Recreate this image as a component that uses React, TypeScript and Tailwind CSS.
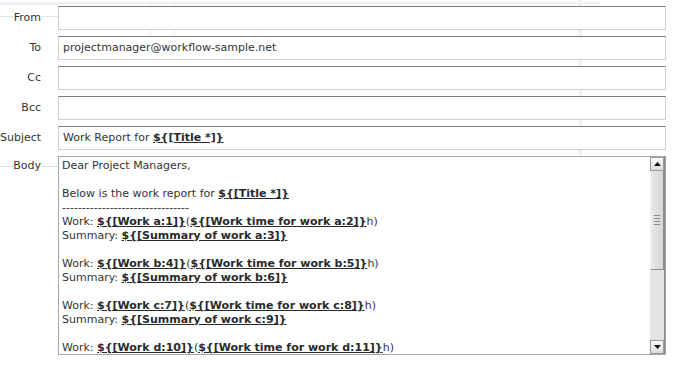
import React from "react";

/* Mail template form: header fields + body with fake classic scrollbar */

const font = "font-['DejaVu_Sans',sans-serif]";

function Ph({ children }: { children: React.ReactNode }) {
  return <span className="font-bold underline text-[#2a2a2a]">{children}</span>;
}

function Field({ label, value }: { label: string; value?: React.ReactNode }) {
  return (
    <div className="flex items-center h-6">
      <div className="w-[58px] shrink-0 pr-[17px] text-right">
        <span className="bg-white">{label}</span>
      </div>
      <div className="flex-1 h-6 bg-white border border-[#cfcfcf] border-t-[#7c7c7c] flex items-center px-[4px] whitespace-nowrap overflow-hidden">
        <span>{value}</span>
      </div>
    </div>
  );
}

function Scrollbar() {
  return (
    <div className="w-[15px] shrink-0 flex flex-col bg-[#e4e4e4] border-r border-[#8a8a8a]">
      <div className="h-[14px] bg-gradient-to-b from-[#fafafa] to-[#dcdcdc] border border-[#9a9a9a] flex items-center justify-center">
        <svg width="7" height="4" viewBox="0 0 7 4"><path d="M0 4 L3.5 0 L7 4 Z" fill="#111" /></svg>
      </div>
      <div className="h-[99px] bg-gradient-to-r from-[#e9e9e9] to-[#d6d6d6] border-r border-b border-[#8c8c8c] border-l border-l-[#f5f5f5] flex flex-col items-center justify-center gap-[2px]">
        <div className="w-[6px] h-px bg-[#888]" />
        <div className="w-[6px] h-px bg-[#888]" />
        <div className="w-[6px] h-px bg-[#888]" />
        <div className="w-[6px] h-px bg-[#888]" />
      </div>
      <div className="flex-1" />
      <div className="h-[14px] bg-gradient-to-b from-[#fafafa] to-[#dcdcdc] border border-[#9a9a9a] flex items-center justify-center">
        <svg width="7" height="4" viewBox="0 0 7 4"><path d="M0 0 L7 0 L3.5 4 Z" fill="#111" /></svg>
      </div>
    </div>
  );
}

const BODY: React.ReactNode[] = [
  "Dear Project Managers,",
  "\u00a0",
  <>Below is the work report for <Ph>{"${[Title *]}"}</Ph></>,
  "--------------------------------",
  <>Work: <Ph>{"${[Work a:1]}"}</Ph>(<Ph>{"${[Work time for work a:2]}"}</Ph>h)</>,
  <>Summary: <Ph>{"${[Summary of work a:3]}"}</Ph></>,
  "\u00a0",
  <>Work: <Ph>{"${[Work b:4]}"}</Ph>(<Ph>{"${[Work time for work b:5]}"}</Ph>h)</>,
  <>Summary: <Ph>{"${[Summary of work b:6]}"}</Ph></>,
  "\u00a0",
  <>Work: <Ph>{"${[Work c:7]}"}</Ph>(<Ph>{"${[Work time for work c:8]}"}</Ph>h)</>,
  <>Summary: <Ph>{"${[Summary of work c:9]}"}</Ph></>,
  "\u00a0",
  <>Work: <Ph>{"${[Work d:10]}"}</Ph>(<Ph>{"${[Work time for work d:11]}"}</Ph>h)</>,
];

export default function App() {
  return (
    <div className={`relative w-[685px] h-[376px] bg-white overflow-hidden text-[11px] text-[#333] ${font}`}>
      {/* faint workflow diagram behind the form */}
      <div className="absolute inset-0 pointer-events-none">
        <div className="absolute left-0 top-[2px] w-[600px] h-[3px] bg-[#f1f1f1]" />
        <div className="absolute left-0 top-[16px] w-[58px] h-px bg-[#dfe8df]" />
        <div className="absolute left-0 top-[166px] w-[58px] h-px bg-[#d7e6d7]" />
        <div className="absolute left-[150px] top-0 w-px h-[36px] bg-[#e8efe8]" />
        <div className="absolute left-[174px] top-0 w-px h-[36px] bg-[#ececec]" />
        <div className="absolute left-[579px] top-0 w-[3px] h-[156px] bg-[#f0f0f0]" />
      </div>

      <div className="relative flex flex-col gap-[6px] pt-[6px] pr-[19px]">
        <Field label="From" />
        <Field label="To" value="projectmanager@workflow-sample.net" />
        <Field label="Cc" />
        <Field label="Bcc" />
        <Field label="Subject" value={<>Work Report for <Ph>{"${[Title *]}"}</Ph></>} />
        <div className="flex">
          <div className="w-[58px] shrink-0 pr-[17px] text-right pt-[3px] leading-[14px]">
            <span className="bg-white">Body</span>
          </div>
          <div className="flex-1 h-[199px] bg-white border border-[#a6a6a6] flex overflow-hidden">
            <div className="flex-1 px-[3px] pt-[2px] leading-[14px] overflow-hidden whitespace-nowrap">
              {BODY.map((l, i) => (
                <div key={i}>{l}</div>
              ))}
            </div>
            <Scrollbar />
          </div>
        </div>
      </div>
    </div>
  );
}
